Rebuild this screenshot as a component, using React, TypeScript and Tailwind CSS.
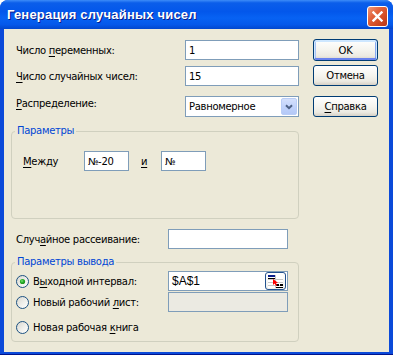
import React from "react";

const F = "font-['DejaVu_Sans',sans-serif] text-[10px] tracking-[-0.3px] text-black";

function U({ children }: { children: React.ReactNode }) {
  return <span className="underline underline-offset-[2px]">{children}</span>;
}

function XPButton({ children, def, className }: { children: React.ReactNode; def?: boolean; className?: string }) {
  return (
    <div
      className={
        "w-[65px] flex items-center justify-center rounded-[3px] border border-[#003C74] bg-[linear-gradient(to_bottom,#FFFFFF_0%,#F5F4EE_50%,#ECEAE2_80%,#D6D0C5_100%)] " +
        (def ? "shadow-[inset_0_1px_0_1px_#CEE7FF,inset_0_-1px_0_1px_#6982EE,inset_1px_0_0_1px_#A9C4F4,inset_-1px_0_0_1px_#89A9EF] " : "") +
        (className || "")
      }
    >
      {children}
    </div>
  );
}

function Radio({ checked }: { checked?: boolean }) {
  return (
    <svg width="13" height="13" viewBox="0 0 13 13" className="shrink-0">
      <defs>
        <linearGradient id="rgf" x1="0" y1="0" x2="1" y2="1">
          <stop offset="0" stopColor="#D6D5CE" />
          <stop offset="0.6" stopColor="#F2F2EE" />
          <stop offset="1" stopColor="#FFFFFF" />
        </linearGradient>
        <radialGradient id="rgd" cx="0.4" cy="0.4" r="0.6">
          <stop offset="0" stopColor="#7BE37B" />
          <stop offset="0.5" stopColor="#2DB32D" />
          <stop offset="1" stopColor="#1A8C1A" />
        </radialGradient>
      </defs>
      <circle cx="6.5" cy="6.5" r="6" fill="url(#rgf)" stroke="#1C5180" strokeWidth="1" />
      {checked && <circle cx="6.5" cy="6.5" r="2.6" fill="url(#rgd)" />}
    </svg>
  );
}

function Input({ value, className }: { value?: string; className?: string }) {
  return (
    <div className={"h-[20px] border border-[#7F9DB9] bg-white flex items-center pl-[3px] " + (className || "")}>
      {value}
    </div>
  );
}

function GroupBox({ title, className, children }: { title: string; className?: string; children: React.ReactNode }) {
  return (
    <div className={"relative w-[288px] border border-[#D0D0BF] rounded-[4px] " + (className || "")}>
      <div className="absolute left-[3px] top-[-8px] px-[2px] bg-[#ECE9D8] text-[#0046D5] leading-[14px]">{title}</div>
      {children}
    </div>
  );
}

export default function App() {
  return (
    <div className={"w-[393px] h-[355px] flex flex-col rounded-t-[8px] overflow-hidden bg-[#0B4AD9] border-b-[1px] border-[#00138C] " + F}>
      {/* Title bar */}
      <div className="h-[29px] shrink-0 flex items-start pl-[7px] bg-[linear-gradient(to_bottom,#3D8CF8_0%,#0B5EEA_10%,#0357EB_40%,#0762F3_62%,#0558EA_85%,#0247CD_100%)]">
        <div className="mt-[7px] font-['Liberation_Sans',sans-serif] font-bold text-[13px] leading-[16px] text-white tracking-[0.2px] [text-shadow:1px_1px_0_#0A1C8A]">
          Генерация случайных чисел
        </div>
        <div className="ml-auto mr-[5px] mt-[6px] w-[21px] h-[21px] rounded-[3px] border border-white bg-[linear-gradient(135deg,#F09A7A_0%,#E2643E_35%,#D04A22_70%,#B8361A_100%)] flex items-center justify-center">
          <svg width="11" height="11" viewBox="0 0 11 11">
            <path d="M1.5 1.5 L9.5 9.5 M9.5 1.5 L1.5 9.5" stroke="#FFFFFF" strokeWidth="2.4" strokeLinecap="square" />
          </svg>
        </div>
      </div>

      {/* Body */}
      <div className="flex-1 mx-[4px] mb-[2px] bg-[#ECE9D8] pl-[7px] flex flex-col">
        {/* Top section */}
        <div className="flex pt-[10px] pl-[5px]">
          <div className="flex flex-col">
            <div className="flex items-center h-[20px] mt-[1px]">
              <div className="w-[169px]">Число <U>п</U>еременных:</div>
              <Input value="1" className="w-[114px]" />
            </div>
            <div className="flex items-center h-[20px] mt-[6px]">
              <div className="w-[169px]"><U>Ч</U>исло случайных чисел:</div>
              <Input value="15" className="w-[114px]" />
            </div>
            <div className="flex items-center h-[21px] mt-[10px]">
              <div className="w-[169px] -mt-[6px]"><U>Р</U>аспределение:</div>
              <div className="w-[114px] h-[21px] border border-[#7F9DB9] bg-white flex items-center pl-[3px] pr-[1px]">
                <div className="flex-1">Равномерное</div>
                <div className="w-[16px] h-[17px] rounded-[2px] border border-[#B9CDF6] bg-[linear-gradient(to_bottom,#D4E0FC_0%,#C1D3FB_50%,#B4C8F7_100%)] flex items-center justify-center">
                  <svg width="8" height="6" viewBox="0 0 8 6">
                    <path d="M1 1.2 L4 4.2 L7 1.2" stroke="#4D6185" strokeWidth="2" fill="none" />
                  </svg>
                </div>
              </div>
            </div>
          </div>
          <div className="flex flex-col ml-[14px]">
            <XPButton def className="h-[22px]">OK</XPButton>
            <XPButton className="h-[21px] mt-[4px]">Отмена</XPButton>
            <XPButton className="h-[21px] mt-[10px]"><span><U>С</U>правка</span></XPButton>
          </div>
        </div>

        {/* Group 1 */}
        <GroupBox title="Параметры" className="h-[88px] mt-[14px]">
          <div className="flex items-center pt-[19px] pl-[11px] h-[39px]">
            <div className="w-[61px]"><U>М</U>ежду</div>
            <Input value="№-20" className="w-[45px]" />
            <div className="w-[32px] pl-[12px]"><U>и</U></div>
            <Input value="№" className="w-[45px]" />
          </div>
        </GroupBox>

        {/* Random scatter */}
        <div className="flex items-center h-[20px] mt-[10px] pl-[5px]">
          <div className="w-[152px]">Случ<U>а</U>йное рассеивание:</div>
          <Input className="w-[120px]" />
        </div>

        {/* Group 2 */}
        <GroupBox title="Параметры вывода" className="h-[80px] mt-[13px]">
          <div className="flex flex-col pt-[8px] pl-[4px]">
            <div className="flex items-center h-[20px]">
              <div className="w-[152px] flex items-center">
                <Radio checked />
                <span className="ml-[4px]">В<U>ы</U>ходной интервал:</span>
              </div>
              <div className="w-[120px] h-[20px] border border-[#7F9DB9] bg-white flex items-center pl-[3px] pr-[1px]">
                <div className="flex-1 font-['Liberation_Sans',sans-serif] text-[12px] tracking-normal">$A$1</div>
                <div className="w-[21px] h-[18px] rounded-[3px] border-[1.5px] border-[#23528F] bg-[linear-gradient(to_bottom,#FFFFFF,#EFEFEA)] flex items-center justify-center">
                  <svg width="15" height="13" viewBox="0 0 15 13">
                    <rect x="0" y="0" width="15" height="13" fill="#FFFFFF" />
                    <path d="M0 4.5 H15 M0 7.5 H15 M0 10.5 H15 M7.5 0 V13" stroke="#C8C8C8" strokeWidth="1" />
                    <rect x="0" y="0" width="7" height="2" fill="#0B1F8C" />
                    <rect x="0" y="3" width="7" height="1" fill="#000000" />
                    <rect x="8" y="9" width="3" height="2" fill="#000000" />
                    <rect x="12" y="9" width="3" height="2" fill="#000000" />
                    <rect x="8" y="12" width="7" height="1" fill="#000000" />
                    <polygon points="5,4 5,10 6.6,8.6 8,11 9.2,10.4 8,8 10,7.8" fill="#FF0000" />
                  </svg>
                </div>
              </div>
            </div>
            <div className="flex items-center h-[20px] mt-[1px]">
              <div className="w-[152px] flex items-center">
                <Radio />
                <span className="ml-[4px]">Новый рабочий <U>л</U>ист:</span>
              </div>
              <div className="w-[120px] h-[20px] border border-[#7F9DB9] bg-[#EBEAE2]" />
            </div>
            <div className="flex items-center h-[20px] mt-[5px]">
              <div className="w-[152px] flex items-center">
                <Radio />
                <span className="ml-[4px]">Новая рабочая <U>к</U>нига</span>
              </div>
            </div>
          </div>
        </GroupBox>
      </div>
    </div>
  );
}
